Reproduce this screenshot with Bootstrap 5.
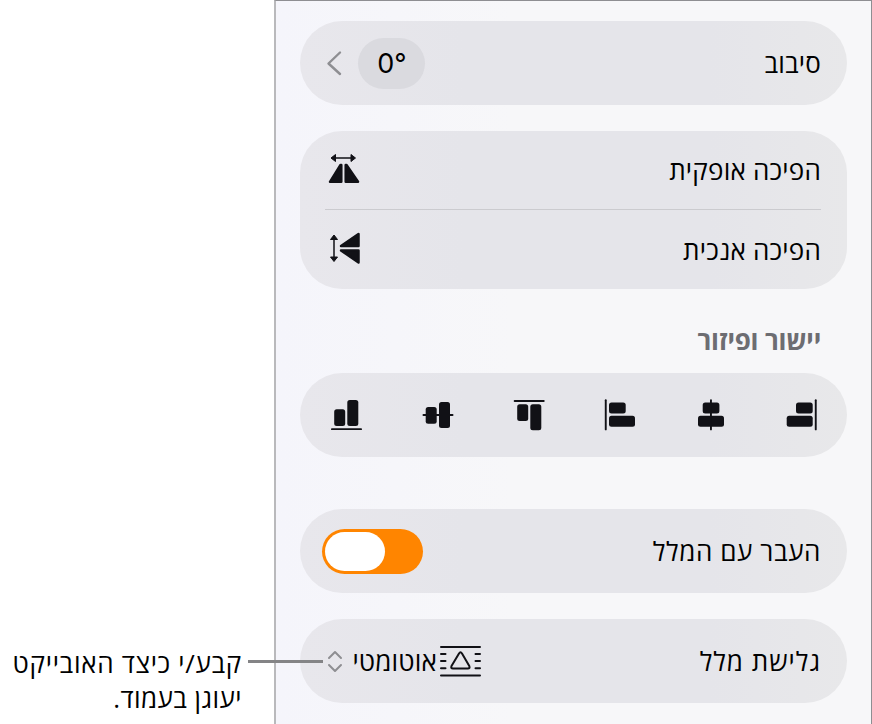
<!DOCTYPE html>
<html lang="he" dir="rtl">
<head>
<meta charset="utf-8">
<meta name="viewport" content="width=device-width, initial-scale=1">
<title>סידור</title>
<link href="https://cdn.jsdelivr.net/npm/bootstrap@5.3.0/dist/css/bootstrap.min.css" rel="stylesheet">
<style>
  body { font-family: "Open Sans", "Noto Sans", "DejaVu Sans", sans-serif; font-size: 26px; line-height: 34px; color: #000; background: #fff; height: 724px; overflow: hidden; }
  .panel { width: 598px; height: 724px; padding: 20px 24px 0 24.400px; background: linear-gradient(90deg, #f5f5fb, #f7f7f9 40%); border: 1px solid #8e8e92; border-left: 2px solid #b9b9bc; border-bottom: 0; }
  .tile { background: linear-gradient(90deg, #e8e7ec, #e5e5ea 30%, #e5e5ea 75%, #e8e8ea); border-radius: 42px; height: 84px; padding: 0 26px 0 22px; }
  .tile-tall { height: 158px; padding-left: 25px; }
  .line-row { height: 78px; }
  .line-row + .line-row { border-top: 1.500px solid #cbcbcf; height: 80px; }
  .gap-above { margin-top: 26px; }
  .gap-above-lg { margin-top: 52px; }
  .heading { color: #6d6d72; font-size: 26px; line-height: 34px; font-weight: 700; height: 84px; padding: 34px 26px 0 0; }
  .degree { width: 67px; height: 51px; padding-top: 2px; border-radius: 26px; background: #dadadf; font-family: Inter, sans-serif; font-size: 27px; }
  .nudge { margin-left: -1px; }
  .toggle { width: 101px; height: 45px; border-radius: 23px; background: #ff8500; padding: 3px; }
  .knob { width: 60px; height: 39px; border-radius: 20px; background: #fff; }
  .icons { padding: 0 29px 0 30px; }
  .caption { width: 274px; padding: 646px 32px 0 0; line-height: 35px; }
  .leader { left: 248px; top: 660px; width: 75px; height: 3px; background: #848486; }
  .txt { display: inline-block; white-space: nowrap; }
  .t1 { letter-spacing: .2px; } .t2, .t3 { letter-spacing: .22px; } .t4 { letter-spacing: -.2px; }
  .t5 { letter-spacing: .6px; } .t6 { letter-spacing: 1px; } .t7 { letter-spacing: .15px; }
  .c1 { letter-spacing: .7px; } .c2 { letter-spacing: .45px; }
  svg { display: block; flex: none; fill: #111116; stroke: #111116; }
  svg.solid { stroke: none; }
  svg.line { fill: none; }
  svg.muted { stroke: #8e8e92; }
  .raise { margin-bottom: 3px; }
</style>
</head>
<body class="position-relative d-flex">
<main class="panel flex-shrink-0">
  <section class="tile d-flex align-items-center justify-content-between">
    <span class="txt t1">סיבוב</span>
    <div class="d-flex align-items-center" dir="ltr">
      <svg class="line muted" width="37" height="30" viewBox="0 0 37 30"><path d="M18 4.500L6.500 15.500L18 26" stroke-width="2.400" stroke-linecap="round" stroke-linejoin="round"/></svg>
      <span class="degree nudge d-flex align-items-center justify-content-center">0°</span>
    </div>
  </section>

  <section class="tile tile-tall gap-above">
    <div class="line-row d-flex align-items-center justify-content-between">
      <span class="txt t2">הפיכה אופקית</span>
      <svg class="raise" width="38" height="32" viewBox="0 0 38 32"><path d="M7 5H29" fill="none" stroke-width="1.500"/><path d="M6 5L10.500 1.500V8.500ZM30.500 5L26 1.500V8.500Z" stroke-width="1" stroke-linejoin="round"/><path d="M16.300 12V28.800H5L15.500 12ZM20.700 12V28.800H33L21.500 12Z" stroke-width="2.500" stroke-linejoin="round"/></svg>
    </div>
    <div class="line-row d-flex align-items-center justify-content-between">
      <span class="txt t3">הפיכה אנכית</span>
      <svg class="raise" width="38" height="34" viewBox="0 0 38 34"><path d="M9 6V28" fill="none" stroke-width="1.500"/><path d="M9 4L5.500 8.500H12.500ZM9 30.500L5.500 26H12.500Z" stroke-width="1" stroke-linejoin="round"/><path d="M16 15L33.500 3V15ZM16 19.400L33.500 31.500V19.400Z" stroke-width="2.500" stroke-linejoin="round"/></svg>
    </div>
  </section>

  <h2 class="heading m-0"><span class="txt t4">יישור ופיזור</span></h2>

  <section class="tile icons d-flex align-items-center justify-content-between" dir="ltr">
    <svg class="solid" width="32" height="32" viewBox="0 0 32 32"><rect x="4.200" y="10.300" width="11" height="16.700" rx="2.500"/><rect x="17.300" y="1" width="11" height="26" rx="2.500"/><rect x="1" y="29.200" width="31" height="1.900" rx=".9"/></svg>
    <svg class="solid" width="32" height="32" viewBox="0 0 32 32"><rect x="3.700" y="8" width="11" height="16.700" rx="2.500"/><rect x="17" y="3" width="11" height="26" rx="2.500"/><rect x=".5" y="15" width="31" height="1.900" rx=".9"/></svg>
    <svg class="solid" width="32" height="32" viewBox="0 0 32 32"><rect x="4.200" y="5.300" width="11" height="16.700" rx="2.500"/><rect x="17.300" y="5.300" width="11" height="26" rx="2.500"/><rect x=".7" y="1" width="31" height="1.900" rx=".9"/></svg>
    <svg class="solid" width="32" height="32" viewBox="0 0 32 32"><rect x="5" y="3.500" width="16.700" height="11" rx="2.500"/><rect x="5" y="16.700" width="26" height="11" rx="2.500"/><rect x=".8" y=".3" width="1.900" height="31" rx=".9"/></svg>
    <svg class="solid" width="32" height="32" viewBox="0 0 32 32"><rect x="7.700" y="3.500" width="16.700" height="11" rx="2.500"/><rect x="3" y="16.700" width="26" height="11" rx="2.500"/><rect x="15" y=".3" width="1.900" height="31" rx=".9"/></svg>
    <svg class="solid" width="32" height="32" viewBox="0 0 32 32"><rect x="10" y="3.500" width="16.700" height="11" rx="2.500"/><rect x=".7" y="16.700" width="26" height="11" rx="2.500"/><rect x="28.800" y=".3" width="1.900" height="31" rx=".9"/></svg>
  </section>

  <section class="tile gap-above-lg d-flex align-items-center justify-content-between">
    <span class="txt t5">העבר עם המלל</span>
    <div class="toggle d-flex" dir="ltr"><div class="knob"></div></div>
  </section>

  <section class="tile gap-above d-flex align-items-center justify-content-between">
    <span class="txt t6">גלישת מלל</span>
    <div class="d-flex align-items-center" dir="ltr">
      <svg class="line muted" width="30" height="30" viewBox="0 0 30 30"><path d="M7 12L13 6L19 12M7 19L13 25L19 19" stroke-width="2" stroke-linecap="round" stroke-linejoin="round"/></svg>
      <span class="txt t7" dir="rtl">אוטומטי</span>
      <svg class="line" width="46" height="34" viewBox="0 0 46 34"><path d="M4 3H43M4 31.500H43M4 10H8.500M4 17H8.500M4 24.300H8.500M38.500 10H43M38.500 17H43M38.500 24.300H43M22 9.500Q23.500 7 25 9.500L32.300 22Q33.300 24.500 30.800 24.500H16Q13.500 24.500 14.500 22Z" stroke-width="2" stroke-linecap="round" stroke-linejoin="round"/></svg>
    </div>
  </section>
</main>
<aside class="caption flex-shrink-0"><span class="txt c1">קבע/י כיצד האובייקט</span><br><span class="txt c2">יעוגן בעמוד.</span></aside>
<div class="leader position-absolute"></div>
<script src="https://cdn.jsdelivr.net/npm/bootstrap@5.3.0/dist/js/bootstrap.bundle.min.js"></script>
</body>
</html>
